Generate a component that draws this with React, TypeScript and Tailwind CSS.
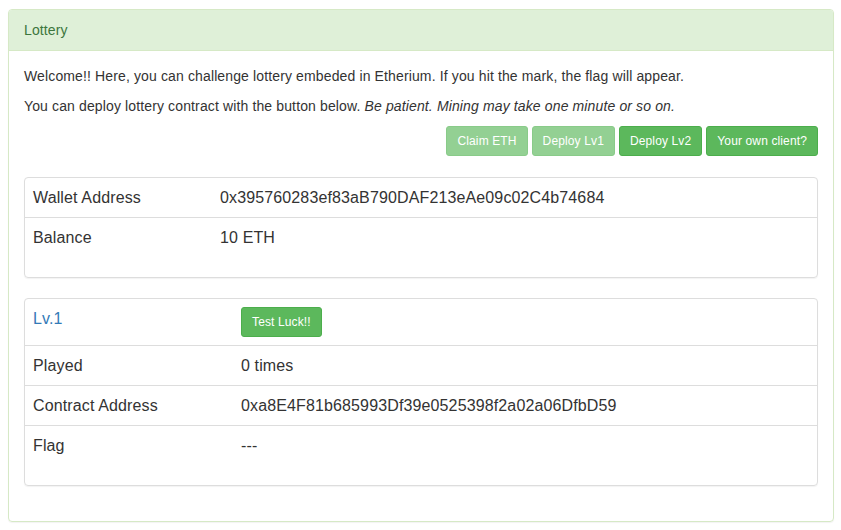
import React from 'react';

type Row = { label: string; value: React.ReactNode };

const wallet: Row[] = [
  { label: 'Wallet Address', value: '0x395760283ef83aB790DAF213eAe09c02C4b74684' },
  { label: 'Balance', value: '10 ETH' },
];

const lv1: Row[] = [
  { label: 'Played', value: '0 times' },
  { label: 'Contract Address', value: '0xa8E4F81b685993Df39e0525398f2a02a06DfbD59' },
  { label: 'Flag', value: '---' },
];

function Btn({ label, disabled }: { label: string; disabled?: boolean }) {
  return (
    <button
      disabled={disabled}
      className={`h-[30px] px-[10px] rounded-[3px] border text-[12px] leading-[18px] text-white ${
        disabled
          ? 'bg-[#93d093] border-[#89cb89] cursor-not-allowed'
          : 'bg-[#5cb85c] border-[#4cae4c]'
      }`}
    >
      {label}
    </button>
  );
}

function InfoBox({
  rows,
  labelWidth,
  head,
}: {
  rows: Row[];
  labelWidth: string;
  head?: Row;
}) {
  return (
    <div className="border border-[#ddd] rounded-[4px] mb-[20px] pb-[20px] shadow-[0_1px_1px_rgba(0,0,0,0.05)]">
      {head && (
        <div className="flex">
          <div className={`${labelWidth} shrink-0 p-[8px] text-[16px] leading-[23px] text-[#337ab7]`}>
            {head.label}
          </div>
          <div className="p-[8px]">{head.value}</div>
        </div>
      )}
      {rows.map((r, i) => (
        <div
          key={r.label}
          className={`flex text-[16px] leading-[23px] ${i === 0 && !head ? '' : 'border-t border-[#ddd]'}`}
        >
          <div className={`${labelWidth} shrink-0 p-[8px]`}>{r.label}</div>
          <div className="p-[8px]">{r.value}</div>
        </div>
      ))}
    </div>
  );
}

export default function App() {
  return (
    <div className="bg-white min-h-[530px] pt-[9px] px-[8px] text-[#333] tracking-[0.13px] font-['Liberation_Sans',Arial,sans-serif]">
      <div className="w-[826px] border border-[#d6e9c6] rounded-[4px] shadow-[0_1px_1px_rgba(0,0,0,0.05)]">
        <div className="bg-[#dff0d8] border-b border-[#d6e9c6] rounded-t-[3px] px-[15px] py-[10px] text-[14px] leading-[20px] text-[#3c763d]">
          Lottery
        </div>
        <div className="p-[15px] text-[14px] leading-[20px]">
          <p className="mb-[10px]">
            Welcome!! Here, you can challenge lottery embeded in Etherium. If you hit the mark, the flag will appear.
          </p>
          <p className="mb-[10px]">
            You can deploy lottery contract with the button below. <em>Be patient. Mining may take one minute or so on.</em>
          </p>
          <div className="flex justify-end gap-[4px] mb-[21px]">
            <Btn label="Claim ETH" disabled />
            <Btn label="Deploy Lv1" disabled />
            <Btn label="Deploy Lv2" />
            <Btn label="Your own client?" />
          </div>
          <InfoBox rows={wallet} labelWidth="w-[187px]" />
          <InfoBox
            rows={lv1}
            labelWidth="w-[208px]"
            head={{ label: 'Lv.1', value: <Btn label="Test Luck!!" /> }}
          />
        </div>
      </div>
    </div>
  );
}
